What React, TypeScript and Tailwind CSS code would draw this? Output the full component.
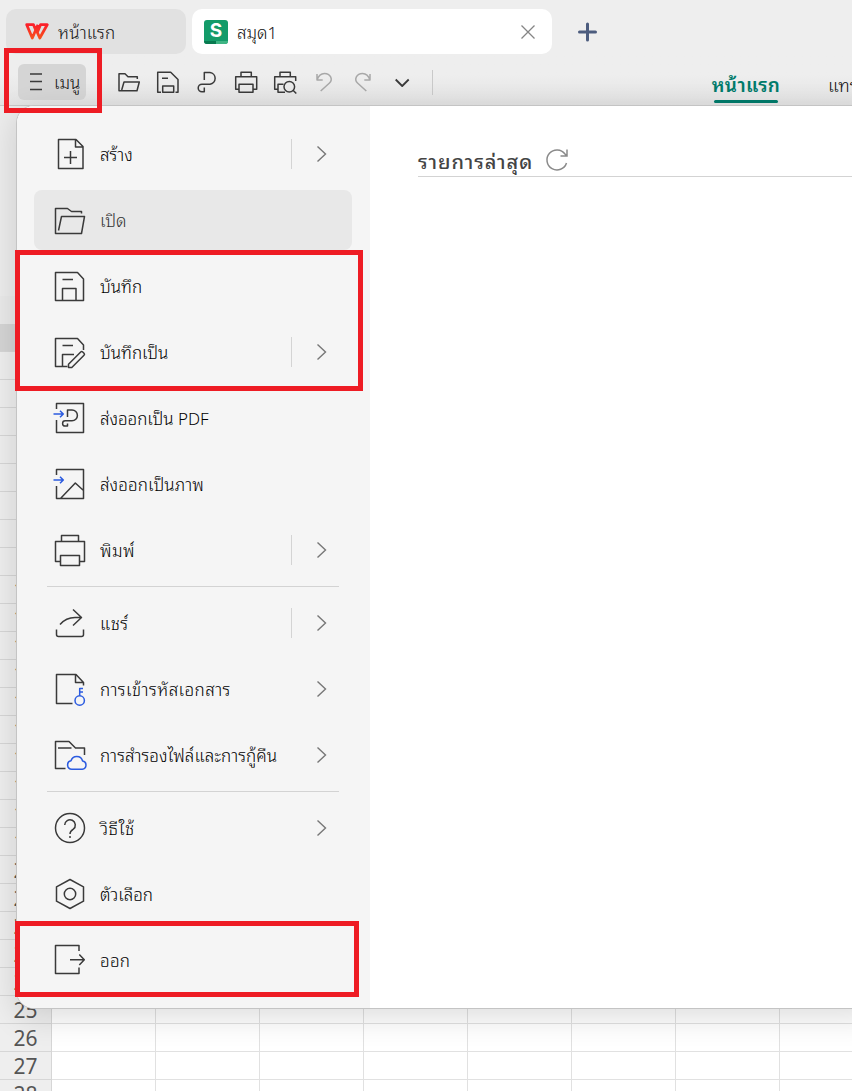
import type { ReactNode } from "react";
import clsx from "clsx";

type MenuItem = {
  label: string;
  icon: ReactNode;
  arrow?: boolean;
  split?: boolean;
  active?: boolean;
  spacing?: string;
};

const BLUE = "#2b5be0";

function Glyph({ children, size = 32, color = "#3a3a3a" }: { children: ReactNode; size?: number; color?: string }) {
  return (
    <svg width={size} height={size} viewBox={`0 0 ${size} ${size}`} fill="none" stroke={color} strokeWidth="1.5"
      strokeLinejoin="round" className="shrink-0 overflow-visible">
      {children}
    </svg>
  );
}

const icons = {
  create: <Glyph><path d="M4.5 1.5H22L29 8.5V30.5H4.5ZM21.5 1.5V9H29M16.5 13V26M10 19.5H23" /></Glyph>,
  open: <Glyph><path d="M27.5 9.5V7.5H17.5L13.5 4.5H1.5V29.5H27.5L30.5 12.5H7.5L4.5 26.5" /></Glyph>,
  save: <Glyph><path d="M1.5 2.5H23.5L29.5 9V30.5H1.5ZM8.5 9.5H19M8.5 30.5V18.5H22V30.5" /></Glyph>,
  saveAs: (
    <Glyph>
      <path d="M13.5 30.5H1.5V2.5H23.5L29.5 9V14M8.5 9.5H19M8.5 30.5V18.5H20" />
      <path d="M14.5 31.5V28.2L26.7 16Q27.7 15 28.7 16L30 17.3Q31 18.3 30 19.3L17.8 31.5Z" />
    </Glyph>
  ),
  pdf: (
    <Glyph>
      <path d="M2.5 7V1.5H29.5V30.5H2.5V18" />
      <path d="M13.5 15V8H18A5.4 5.4 0 0 1 18 18.8H11.2A2.6 2.6 0 0 0 11.2 24H13.5V21.5" />
      <path d="M-.5 12H9.3M6 8.7L9.3 12L6 15.3" stroke={BLUE} />
    </Glyph>
  ),
  image: (
    <Glyph>
      <path d="M2.5 7V1.5H29.5V30.5H2.5V18M6.5 30.5L21.3 15L29.5 22.5" />
      <path d="M-.5 12H9.3M6 8.7L9.3 12L6 15.3" stroke={BLUE} />
    </Glyph>
  ),
  print: <Glyph><path d="M7.5 7.5V1.5H24.5V7.5M6.5 27.5H1.5V7.5H30.5V27.5H25.5M6.5 21.5H25.5V31.5H6.5Z" /></Glyph>,
  share: <Glyph><path d="M2.5 22.5V27.5Q2.5 29.5 4.5 29.5H27.5Q29.5 29.5 29.5 27.5V22.5M6 17.5Q12 10.5 21 10.5H27.5M19 2.5L27.5 10.5L19 18.5" /></Glyph>,
  encrypt: (
    <Glyph>
      <path d="M18.5 30.5H2.5V1.5H22L29.5 9.5V12.5M21.5 1.5V9.5H29.5" />
      <path d="M25.7 22.7V15.5H29M25.7 19H29" stroke={BLUE} />
      <circle cx="25.7" cy="27.5" r="4.7" stroke={BLUE} />
    </Glyph>
  ),
  backup: (
    <Glyph>
      <path d="M11.5 29.5H1.5V2.5H15L21.5 9H30.5V16M4 9H17.5" />
      <path d="M17.8 30.3A4.3 4.3 0 0 1 17 21.8A6 6 0 0 1 28.6 22A4.2 4.2 0 0 1 28.2 30.3Z" stroke={BLUE} />
    </Glyph>
  ),
  help: (
    <Glyph>
      <circle cx="16" cy="16" r="14.5" />
      <path d="M10.7 13A5.3 5.3 0 1 1 19.3 17.2C17 18.8 16 19.5 16 22M16 24V26" />
    </Glyph>
  ),
  options: <Glyph><path d="M16 1.5L29.5 8.8V23.2L16 30.5L2.5 23.2V8.8Z" /><circle cx="16" cy="16" r="5.7" /></Glyph>,
  exit: <Glyph><path d="M25 7V1.5H1.5V29.5H25V23.5M16 15.7H30.3M25.3 10.5L30.3 15.7L25.3 20.9" /></Glyph>,
};

const groups: MenuItem[][] = [
  [
    { label: "สร้าง", icon: icons.create, arrow: true, split: true },
    { label: "เปิด", icon: icons.open, active: true },
    { label: "บันทึก", icon: icons.save },
    { label: "บันทึกเป็น", icon: icons.saveAs, arrow: true, split: true },
    { label: "ส่งออกเป็น PDF", icon: icons.pdf },
    { label: "ส่งออกเป็นภาพ", icon: icons.image, spacing: "tracking-[0.15px]" },
    { label: "พิมพ์", icon: icons.print, arrow: true, split: true, spacing: "tracking-[0.5px]" },
  ],
  [
    { label: "แชร์", icon: icons.share, arrow: true, split: true, spacing: "tracking-[0.5px]" },
    { label: "การเข้ารหัสเอกสาร", icon: icons.encrypt, arrow: true, spacing: "tracking-[0.45px]" },
    { label: "การสำรองไฟล์และการกู้คืน", icon: icons.backup, arrow: true, spacing: "tracking-[0.08px]" },
  ],
  [
    { label: "วิธีใช้", icon: icons.help, arrow: true, spacing: "tracking-[0.5px]" },
    { label: "ตัวเลือก", icon: icons.options },
    { label: "ออก", icon: icons.exit, spacing: "tracking-[0.3px]" },
  ],
];

const rows = Array.from({ length: 28 }, (_, i) => i + 1);
const columns = Array.from({ length: 8 }, (_, i) => i);

function TabBar() {
  return (
    <div className="flex h-[54px] items-end pl-1.5">
      <div className="flex h-[45px] w-[180px] items-center rounded-[10px] bg-[#e1e1e1] pl-[19px]">
        <svg width="24" height="17" viewBox="0 0 24 17" fill="none" strokeWidth="2.8" strokeLinejoin="round">
          <defs>
            <linearGradient id="wps" x1="0" y1="0" x2="0" y2="1">
              <stop offset="0" stopColor="#fb1f2a" />
              <stop offset="1" stopColor="#f7501c" />
            </linearGradient>
          </defs>
          <path d="M10.5 6.5L8.5 1.7H1.7L7.3 15L13 1.7M11 6.5L14.8 15L22.2 1.7H15.5L12.5 9" stroke="url(#wps)" />
        </svg>
        <span className="ml-[9px] text-[17px] font-light tracking-[0.2px] text-[#111]">หน้าแรก</span>
      </div>
      <div className="ml-1.5 flex h-[45px] w-[360px] items-center rounded-[10px] bg-white pl-3 pr-4">
        <div className="relative flex h-6 w-6 shrink-0 justify-center overflow-hidden rounded-[3px] bg-[#139b69] font-['Inter',sans-serif] text-[19px] font-bold leading-[21px] text-white">
          S
          <span className="absolute bottom-0 left-0 h-[3px] w-3 bg-[#087a50]" />
          <span className="absolute bottom-0 right-0 h-[3px] w-3 bg-[#3fb584]" />
        </div>
        <span className="ml-[9px] text-[17px] font-light text-[#111]">สมุด1</span>
        <svg width="16" height="16" viewBox="0 0 16 16" fill="none" stroke="#858585" strokeWidth="1.3" className="ml-auto">
          <path d="M1.5 1.5L14.5 14.5M14.5 1.5L1.5 14.5" />
        </svg>
      </div>
      <svg width="20" height="20" viewBox="0 0 20 20" fill="none" stroke="#4c5c7e" strokeWidth="3" strokeLinecap="round" className="mb-[12.5px] ml-[25px]">
        <path d="M10.5 2V18M2.5 10H18.5" />
      </svg>
    </div>
  );
}

function Toolbar() {
  return (
    <div className="flex h-[52px] border-b border-[#c8c8c8] bg-linear-to-b from-[#eeeeee] from-40% to-[#e3e3e3]">
      <button className="ml-[18px] mt-2.5 flex h-9 w-[68px] shrink-0 items-center rounded-md bg-[#d5d5d5] pl-3 text-[17px] font-light text-[#111]">
        <svg width="12" height="18" viewBox="0 0 12 18" stroke="#3a3a3a" strokeWidth="1.4" className="shrink-0">
          <path d="M0 1H12M0 8.5H12M0 16.5H12" />
        </svg>
        <span className="ml-3 whitespace-nowrap">เมนู</span>
      </button>
      <div className="ml-[29px] mt-3.5 flex shrink-0 gap-[11px]">
        <Glyph size={28}><path d="M22.3 11V8.7H13L10 5.7H4V22.7H22L24.3 14H9L6.7 22" /></Glyph>
        <Glyph size={28}><path d="M7 24.3H3.7V4.3H16.7L24 11.5V24.3H21.5M8.7 18H19.7V24.3H8.7ZM8 10.3H14" /></Glyph>
        <Glyph size={28}><path d="M11.3 12V4.5H17A5.9 5.9 0 0 1 17 16.2H9A3.8 3.8 0 0 0 9 23.8H11.3V19.5" /></Glyph>
        <Glyph size={28}><path d="M9 8.7V4.3H19.3V8.7M7 21.3H3.7V8.7H24.7V21.3H21M7 16.3H21V24.3H7Z" /></Glyph>
        <Glyph size={28}>
          <path d="M9 8.7V4.3H19.3V8.7M7 21.3H3.7V8.7H24.7V13M12.5 16.3H7V24.3H14" />
          <circle cx="18.3" cy="18.7" r="5.3" />
          <path d="M22 22.3L25.3 25.5" />
        </Glyph>
        <Glyph size={28} color="#a8a8a8"><path d="M7 6V12H12.7M7 12C8.5 7.5 11 5.4 14.5 5.4C20.5 5.4 23.2 11.5 19.5 15L10.7 23" /></Glyph>
        <Glyph size={28} color="#a8a8a8"><path d="M21 6V12H15.3M21 12C19.5 7.5 17 5.4 13.5 5.4C7.5 5.4 4.8 11.5 8.5 15L17.3 23" /></Glyph>
        <Glyph size={28}><path d="M7.7 11.5L14.2 18L20.7 11.5" strokeWidth="1.8" /></Glyph>
      </div>
      <span className="ml-4 mt-4 h-[25px] w-px shrink-0 bg-[#c9c9c9]" />
      <div className="ml-[278px] flex w-[70px] shrink-0 flex-col items-center pt-[18px] font-semibold text-[#007b6b]">
        <span className="whitespace-nowrap text-[19px] leading-[24px] tracking-[0.3px]">หน้าแรก</span>
        <span className="mt-1 h-[3px] w-16 rounded-full bg-[#007b6b]" />
      </div>
      <span className="ml-[47px] mt-[18px] whitespace-nowrap text-[18px] font-light leading-[24px] text-[#111]">แทรก</span>
    </div>
  );
}

function Sheet() {
  return (
    <div className="bg-white">
      <div className="h-[190px] bg-[#ececec]" />
      <div className="h-7 bg-[#e9e9e9]" />
      {rows.map((row) => (
        <div key={row} className="flex h-7">
          <div className={clsx("w-[52px] shrink-0 border-b border-r border-[#d6d6d6] text-center font-['Noto_Sans',sans-serif] text-[21px] leading-[29px] text-[#555]",
            row === 1 ? "bg-[#d4d4d4]" : "bg-[#eeeeee]")}>
            {row}
          </div>
          {columns.map((col) => (
            <div key={col} className="w-[104px] shrink-0 border-b border-r border-[#e1e1e1]" />
          ))}
        </div>
      ))}
    </div>
  );
}

function MenuRow({ item }: { item: MenuItem }) {
  return (
    <div className={clsx("flex h-[60px] items-center rounded-lg pl-5", item.active ? "bg-[#e8e8e8] text-[#333]" : "text-black")}>
      {item.icon}
      <span className={clsx("ml-3.5 whitespace-nowrap text-[17px] font-light", item.spacing)}>{item.label}</span>
      {item.arrow && (
        <div className="ml-auto mr-[25px] flex items-center">
          {item.split && <span className="mr-6 h-[30px] w-px bg-[#d4d4d4]" />}
          <svg width="11" height="18" viewBox="0 0 11 18" fill="none" stroke="#777" strokeWidth="1.4">
            <path d="M1.5 1.5L9.5 9L1.5 16.5" />
          </svg>
        </div>
      )}
    </div>
  );
}

function FileMenu() {
  return (
    <div className="absolute left-[16px] top-[105px] flex h-[904px] w-[860px] overflow-hidden rounded-l-[18px] border border-[#c4c4c4] bg-white shadow-[0_8px_32px_rgba(0,0,0,0.14)]">
      <div className="flex w-[353px] shrink-0 flex-col gap-1.5 bg-[#f5f5f5] pl-[17px] pr-[18px] pt-[18px]">
        {groups.map((items, i) => (
          <div key={i} className="flex flex-col gap-1.5">
            {i > 0 && <div className="ml-[13px] mr-[13px] h-px bg-[#d3d3d3]" />}
            {items.map((item) => <MenuRow key={item.label} item={item} />)}
          </div>
        ))}
      </div>
      <div className="flex-1 pl-12 pt-[38px]">
        <div className="flex h-[33px] items-center border-b border-[#d3d3d3]">
          <h2 className="w-[115px] whitespace-nowrap text-[20px] font-medium tracking-[0.95px] text-[#444]">รายการล่าสุด</h2>
          <svg width="24" height="24" viewBox="0 0 24 24" fill="none" stroke="#8a8a8a" strokeWidth="1.5" className="ml-3">
            <path d="M21.5 15A10 10 0 1 1 20 6L22 8M22 1.5V8H15.5" />
          </svg>
        </div>
      </div>
    </div>
  );
}

export default function App() {
  return (
    <div className="relative h-[1091px] w-[852px] overflow-hidden bg-[#eeeeee] font-['Noto_Sans_Thai_Looped','Noto_Sans_Thai','Noto_Sans',sans-serif]">
      <TabBar />
      <Toolbar />
      <Sheet />
      <FileMenu />
      <div className="absolute left-1 top-12 h-[65px] w-[98px] border-[5px] border-[#ee1c24]" />
      <div className="absolute left-[15px] top-[250px] h-[141px] w-[348px] border-[5px] border-[#ee1c24]" />
      <div className="absolute left-[15px] top-[921px] h-[76px] w-[344px] border-[5px] border-[#ee1c24]" />
    </div>
  );
}
